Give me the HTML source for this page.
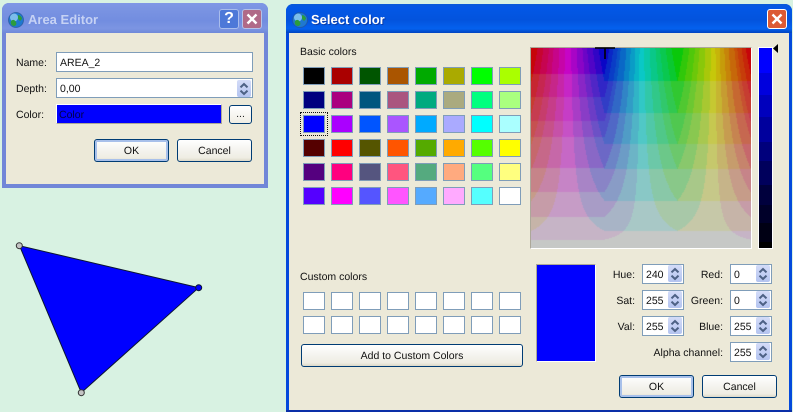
<!DOCTYPE html>
<html><head><meta charset="utf-8"><title>Select color</title>
<style>
html,body{margin:0;padding:0;width:793px;height:412px;overflow:hidden;background:#d8f2e2}
body{position:relative;font-family:"Liberation Sans",sans-serif;font-size:10.5px;color:#111;text-rendering:geometricPrecision}
div,span,canvas,svg{position:absolute;box-sizing:border-box}
.win{background:#ece9d8}
.tb1{background:linear-gradient(#8097e6 0,#7a94e2 20%,#728de0 60%,#7c95e2 85%,#6f89d9 100%);border-radius:7px 7px 0 0}
.tb2{background:linear-gradient(#0a5ad8 0,#0358e6 12%,#0353dd 55%,#0461ee 85%,#0244c0 100%);border-radius:7px 7px 0 0}
.lb{white-space:nowrap;line-height:14px;height:14px;margin-top:1px}
.r{text-align:right}
.f{background:#fff;border:1px solid #7f9db9}
.btn{border:1px solid #003c74;border-radius:3px;background:linear-gradient(#fff 0,#f4f3ee 50%,#efede3 85%,#dcd8c8 100%);text-align:center;line-height:23px}
.def{box-shadow:inset 0 0 0 2px #a8c0ea}
.sw{width:22px;height:18px;border:1px solid #7f9db9}
.sb{background:linear-gradient(#d4dcf8,#b4c4f0);border-radius:2px;width:14px;height:17px}
.sb svg{left:0;top:0}
</style></head><body>
<svg width="0" height="0" style="left:0;top:0"><defs>
<g id="ar"><path d="M3.5 7.4 7 4 10.5 7.4M3.5 10.6 7 14 10.5 10.6" fill="none" stroke="#4d6185" stroke-width="2"/></g>
<g id="gl"><circle cx="8" cy="8" r="7.5" fill="#1f78d0"/><circle cx="6" cy="5.5" r="4" fill="#8cc8f0" opacity=".85"/><path d="M3 9c2-2 4-1 5 1s0 4-2 4-4-2-3-5zM10 3c2 0 4 2 4 4l-2 2-2-2z" fill="#2c9c3c"/><circle cx="8" cy="8" r="7.5" fill="none" stroke="#27508f" stroke-opacity=".6"/></g>
</defs></svg>

<!-- Area Editor -->
<div style="left:2px;top:3px;width:266px;height:185px;background:#7186d8;border-radius:7px 7px 0 0"></div>
<div class="tb1" style="left:2px;top:3px;width:266px;height:30px"></div>
<div class="win" style="left:6px;top:33px;width:258px;height:151px"></div>
<svg style="left:8px;top:12px" width="16" height="16"><use href="#gl"/></svg>
<div class="lb" style="left:28px;top:12px;margin-top:0;font-size:13px;font-weight:bold;color:#c6d2f4;height:16px;line-height:16px">Area Editor</div>
<div style="left:219px;top:9px;width:20px;height:20px;border:1px solid #a9bdec;border-radius:3px;background:#4d78d8;color:#fff;font-weight:bold;font-size:16px;text-align:center;line-height:18px">?</div>
<div style="left:242px;top:9px;width:20px;height:20px;border:1px solid #b5c2e8;border-radius:3px;background:#b06a88"></div>
<svg style="left:242px;top:9px" width="20" height="20"><path d="M5.5 5.5 14.5 14.5M14.5 5.5 5.5 14.5" stroke="#fff" stroke-width="2.4"/></svg>

<div class="lb" style="left:16px;top:55px">Name:</div>
<div class="f" style="left:56px;top:52px;width:197px;height:20px"></div>
<div class="lb" style="left:60px;top:55px">AREA_2</div>
<div class="lb" style="left:16px;top:81px">Depth:</div>
<div class="f" style="left:56px;top:78px;width:197px;height:20px"></div>
<div class="lb" style="left:60px;top:81px">0,00</div>
<div class="sb" style="left:237px;top:80px"><svg width="14" height="17"><use href="#ar"/></svg></div>
<div class="lb" style="left:16px;top:107px">Color:</div>
<div style="left:56px;top:104px;width:166px;height:20px;background:#0000ff;border:1px solid #fff;border-right-color:#aca899;border-bottom-color:#aca899"></div>
<div class="lb" style="left:59px;top:107px;color:#00004a">Color</div>
<div class="btn" style="left:229px;top:105px;width:23px;height:19px;line-height:17px;color:#222;background:linear-gradient(#fff,#f0eee4)">...</div>
<div class="btn def" style="left:94px;top:139px;width:75px;height:23px">OK</div>
<div class="btn" style="left:177px;top:139px;width:75px;height:23px">Cancel</div>

<!-- Triangle -->
<svg style="left:0;top:200px" width="280" height="212">
<path d="M19.5 45.7 198.7 87.7 81.3 192.7Z" fill="#0000ff" stroke="#0b1530" stroke-width="1"/>
<circle cx="19.3" cy="45.7" r="3" fill="#c4c4c4" stroke="#333" stroke-width="1"/>
<circle cx="198.7" cy="87.7" r="3" fill="#0000ff" stroke="#0b1530" stroke-width="1"/>
<circle cx="81.3" cy="192.7" r="3" fill="#c4c4c4" stroke="#333" stroke-width="1"/>
</svg>

<!-- Select color -->
<div style="left:286px;top:4px;width:506px;height:408px;background:#0349dc;border-radius:7px 7px 0 0"></div>
<div class="tb2" style="left:286px;top:4px;width:506px;height:29px"></div>
<div class="win" style="left:289px;top:33px;width:500px;height:377px"></div>
<div style="left:286px;top:410px;width:506px;height:2px;background:#0a2fa8"></div>
<svg style="left:292px;top:12px" width="16" height="16"><use href="#gl"/></svg>
<div class="lb" style="left:311px;top:12px;margin-top:0;font-size:13px;font-weight:bold;color:#fff;height:16px;line-height:16px;text-shadow:1px 1px 0 #0a3ba8">Select color</div>
<div style="left:767px;top:9px;width:20px;height:20px;border:1px solid #fff;border-radius:3px;background:#dc5a34"></div>
<svg style="left:767px;top:9px" width="20" height="20"><path d="M5.5 5.5 14.5 14.5M14.5 5.5 5.5 14.5" stroke="#fff" stroke-width="2.4"/></svg>

<div class="lb" style="left:300px;top:44px">Basic colors</div>
<div class="sw" style="left:303px;top:67px;background:#000000"></div><div class="sw" style="left:331px;top:67px;background:#aa0000"></div><div class="sw" style="left:359px;top:67px;background:#005500"></div><div class="sw" style="left:387px;top:67px;background:#aa5500"></div><div class="sw" style="left:415px;top:67px;background:#00aa00"></div><div class="sw" style="left:443px;top:67px;background:#aaaa00"></div><div class="sw" style="left:471px;top:67px;background:#00ff00"></div><div class="sw" style="left:499px;top:67px;background:#aaff00"></div>
<div class="sw" style="left:303px;top:91px;background:#00007f"></div><div class="sw" style="left:331px;top:91px;background:#aa007f"></div><div class="sw" style="left:359px;top:91px;background:#00557f"></div><div class="sw" style="left:387px;top:91px;background:#aa557f"></div><div class="sw" style="left:415px;top:91px;background:#00aa7f"></div><div class="sw" style="left:443px;top:91px;background:#aaaa7f"></div><div class="sw" style="left:471px;top:91px;background:#00ff7f"></div><div class="sw" style="left:499px;top:91px;background:#aaff7f"></div>
<div class="sw" style="left:303px;top:115px;background:#0000ff"></div><div class="sw" style="left:331px;top:115px;background:#aa00ff"></div><div class="sw" style="left:359px;top:115px;background:#0055ff"></div><div class="sw" style="left:387px;top:115px;background:#aa55ff"></div><div class="sw" style="left:415px;top:115px;background:#00aaff"></div><div class="sw" style="left:443px;top:115px;background:#aaaaff"></div><div class="sw" style="left:471px;top:115px;background:#00ffff"></div><div class="sw" style="left:499px;top:115px;background:#aaffff"></div>
<div class="sw" style="left:303px;top:139px;background:#550000"></div><div class="sw" style="left:331px;top:139px;background:#ff0000"></div><div class="sw" style="left:359px;top:139px;background:#555500"></div><div class="sw" style="left:387px;top:139px;background:#ff5500"></div><div class="sw" style="left:415px;top:139px;background:#55aa00"></div><div class="sw" style="left:443px;top:139px;background:#ffaa00"></div><div class="sw" style="left:471px;top:139px;background:#55ff00"></div><div class="sw" style="left:499px;top:139px;background:#ffff00"></div>
<div class="sw" style="left:303px;top:163px;background:#55007f"></div><div class="sw" style="left:331px;top:163px;background:#ff007f"></div><div class="sw" style="left:359px;top:163px;background:#55557f"></div><div class="sw" style="left:387px;top:163px;background:#ff557f"></div><div class="sw" style="left:415px;top:163px;background:#55aa7f"></div><div class="sw" style="left:443px;top:163px;background:#ffaa7f"></div><div class="sw" style="left:471px;top:163px;background:#55ff7f"></div><div class="sw" style="left:499px;top:163px;background:#ffff7f"></div>
<div class="sw" style="left:303px;top:187px;background:#5500ff"></div><div class="sw" style="left:331px;top:187px;background:#ff00ff"></div><div class="sw" style="left:359px;top:187px;background:#5555ff"></div><div class="sw" style="left:387px;top:187px;background:#ff55ff"></div><div class="sw" style="left:415px;top:187px;background:#55aaff"></div><div class="sw" style="left:443px;top:187px;background:#ffaaff"></div><div class="sw" style="left:471px;top:187px;background:#55ffff"></div><div class="sw" style="left:499px;top:187px;background:#ffffff"></div>
<div style="left:300px;top:112px;width:28px;height:24px;border:1px dotted #111"></div>

<div class="lb" style="left:300px;top:269px">Custom colors</div>
<div class="sw" style="left:303px;top:292px;background:#fff"></div><div class="sw" style="left:331px;top:292px;background:#fff"></div><div class="sw" style="left:359px;top:292px;background:#fff"></div><div class="sw" style="left:387px;top:292px;background:#fff"></div><div class="sw" style="left:415px;top:292px;background:#fff"></div><div class="sw" style="left:443px;top:292px;background:#fff"></div><div class="sw" style="left:471px;top:292px;background:#fff"></div><div class="sw" style="left:499px;top:292px;background:#fff"></div>
<div class="sw" style="left:303px;top:316px;background:#fff"></div><div class="sw" style="left:331px;top:316px;background:#fff"></div><div class="sw" style="left:359px;top:316px;background:#fff"></div><div class="sw" style="left:387px;top:316px;background:#fff"></div><div class="sw" style="left:415px;top:316px;background:#fff"></div><div class="sw" style="left:443px;top:316px;background:#fff"></div><div class="sw" style="left:471px;top:316px;background:#fff"></div><div class="sw" style="left:499px;top:316px;background:#fff"></div>
<div class="btn" style="left:301px;top:344px;width:222px;height:23px">Add to Custom Colors</div>

<!-- Picker -->
<div style="left:530px;top:47px;width:222px;height:202px;background:#fff;border:1px solid #aca899;border-right-color:#fff;border-bottom-color:#fff"></div>
<canvas id="cp" width="220" height="200" style="left:531px;top:48px;width:220px;height:200px;background:linear-gradient(90deg,#c80000,#c800c8 16.6%,#0000c8 33.3%,#00c8c8 50%,#00c800 66.6%,#c8c800 83.3%,#c80000)"></canvas>
<svg style="left:595px;top:46px" width="21" height="14"><path d="M0 2H20M10 2V13" stroke="#000" stroke-width="1.6" fill="none"/></svg>

<div style="left:758px;top:47px;width:15px;height:202px;background:#fff"></div>
<div style="left:759px;top:48px;width:13px;height:25px;background:#0000ff"></div>
<div style="left:759px;top:73px;width:13px;height:22px;background:#0000dd"></div>
<div style="left:759px;top:95px;width:13px;height:22px;background:#0000bd"></div>
<div style="left:759px;top:117px;width:13px;height:25px;background:#00009d"></div>
<div style="left:759px;top:142px;width:13px;height:19px;background:#00007c"></div>
<div style="left:759px;top:161px;width:13px;height:24px;background:#00005c"></div>
<div style="left:759px;top:185px;width:13px;height:20px;background:#00003d"></div>
<div style="left:759px;top:205px;width:13px;height:18px;background:#000029"></div>
<div style="left:759px;top:223px;width:13px;height:19px;background:#000014"></div>
<div style="left:759px;top:242px;width:13px;height:6px;background:#000"></div>
<svg style="left:772px;top:43px" width="8" height="11"><path d="M1 5.5 6 1V10Z" fill="#000"/></svg>

<div style="left:536px;top:264px;width:60px;height:98px;background:#0000ff;border:1px solid #fff;border-left-color:#aca899;border-top-color:#aca899"></div>

<div class="lb r" style="left:590px;top:267px;width:45px">Hue:</div>
<div class="f" style="left:642px;top:264px;width:42px;height:20px"></div><div class="lb" style="left:646px;top:267px">240</div><div class="sb" style="left:668px;top:265px"><svg width="14" height="17"><use href="#ar"/></svg></div>
<div class="lb r" style="left:590px;top:293px;width:45px">Sat:</div>
<div class="f" style="left:642px;top:290px;width:42px;height:20px"></div><div class="lb" style="left:646px;top:293px">255</div><div class="sb" style="left:668px;top:291px"><svg width="14" height="17"><use href="#ar"/></svg></div>
<div class="lb r" style="left:590px;top:319px;width:45px">Val:</div>
<div class="f" style="left:642px;top:316px;width:42px;height:20px"></div><div class="lb" style="left:646px;top:319px">255</div><div class="sb" style="left:668px;top:317px"><svg width="14" height="17"><use href="#ar"/></svg></div>

<div class="lb r" style="left:680px;top:267px;width:43px">Red:</div>
<div class="f" style="left:730px;top:264px;width:42px;height:20px"></div><div class="lb" style="left:734px;top:267px">0</div><div class="sb" style="left:756px;top:265px"><svg width="14" height="17"><use href="#ar"/></svg></div>
<div class="lb r" style="left:680px;top:293px;width:43px">Green:</div>
<div class="f" style="left:730px;top:290px;width:42px;height:20px"></div><div class="lb" style="left:734px;top:293px">0</div><div class="sb" style="left:756px;top:291px"><svg width="14" height="17"><use href="#ar"/></svg></div>
<div class="lb r" style="left:680px;top:319px;width:43px">Blue:</div>
<div class="f" style="left:730px;top:316px;width:42px;height:20px"></div><div class="lb" style="left:734px;top:319px">255</div><div class="sb" style="left:756px;top:317px"><svg width="14" height="17"><use href="#ar"/></svg></div>
<div class="lb r" style="left:623px;top:345px;width:100px">Alpha channel:</div>
<div class="f" style="left:730px;top:342px;width:42px;height:20px"></div><div class="lb" style="left:734px;top:345px">255</div><div class="sb" style="left:756px;top:343px"><svg width="14" height="17"><use href="#ar"/></svg></div>

<div class="btn def" style="left:619px;top:375px;width:75px;height:23px">OK</div>
<div class="btn" style="left:702px;top:375px;width:75px;height:23px">Cancel</div>

<script>
var c=document.getElementById('cp').getContext('2d'),W=220,H=200,im=c.createImageData(W,H),d=im.data;
var RT=[33,65,96,121,153,183],RO=[10,49,80,108,137,168,198];
var GT=[26,49,73,89,120,144,169,192],GO=[5,38,61,81,104,132,156,180,200];
function q(v,T,O){for(var i=0;i<T.length;i++){if(v<T[i])return O[i]}return O[T.length]}
for(var y=0;y<H;y++){var s=1-y/(H-1);for(var x=0;x<W;x++){
 var h=(360-x*360/(W-1))/60%6,i=Math.floor(h),f=h-i,v=200,p=v*(1-s),m=v*(1-s*f),t=v*(1-s*(1-f)),r,g,b;
 if(i==0){r=v;g=t;b=p}else if(i==1){r=m;g=v;b=p}else if(i==2){r=p;g=v;b=t}else if(i==3){r=p;g=m;b=v}else if(i==4){r=t;g=p;b=v}else{r=v;g=p;b=m}
 var k=(y*W+x)*4;d[k]=q(r,RT,RO);d[k+1]=q(g,GT,GO);d[k+2]=q(b,RT,RO);d[k+3]=255}}
c.putImageData(im,0,0);
</script>
</body></html>
